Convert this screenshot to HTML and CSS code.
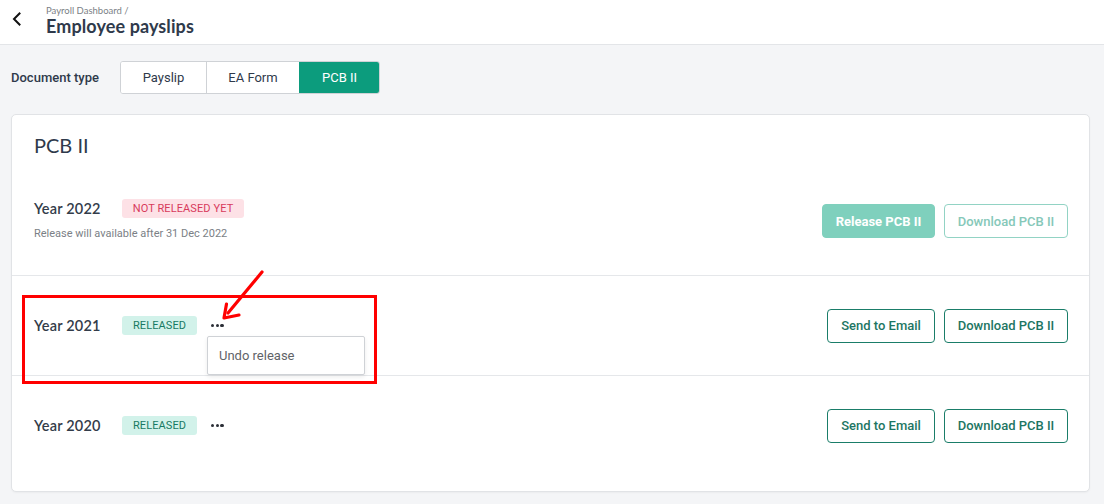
FILE: index.html
```html
<!DOCTYPE html>
<html lang="en">
<head>
<meta charset="utf-8">
<title>Employee payslips</title>
<link rel="stylesheet" href="styles.css">
</head>
<body>
<header class="topbar">
  <button class="back" aria-label="Back">
    <svg width="10" height="14" viewBox="0 0 10 14"><path d="M7.5 1.5 L2 7 L7.5 12.5" fill="none" stroke="#111" stroke-width="2" stroke-linecap="square"/></svg>
  </button>
  <div class="titles">
    <div class="crumb">Payroll Dashboard /</div>
    <h1 class="page-title">Employee payslips</h1>
  </div>
</header>

<div class="toolbar">
  <span class="toolbar-label">Document type</span>
  <div class="segmented">
    <button class="seg seg-payslip">Payslip</button>
    <button class="seg seg-ea">EA Form</button>
    <button class="seg seg-pcb active">PCB II</button>
  </div>
</div>

<section class="card">
  <h2 class="card-title">PCB II</h2>

  <div class="row row-first">
    <div class="row-left">
      <div class="row-main">
        <span class="year">Year 2022</span>
        <span class="badge badge-pending">NOT RELEASED YET</span>
      </div>
      <div class="note">Release will available after 31 Dec 2022</div>
    </div>
    <div class="actions">
      <button class="btn btn-solid-disabled btn-release">Release PCB II</button>
      <button class="btn btn-outline-disabled btn-download">Download PCB II</button>
    </div>
  </div>

  <div class="row">
    <div class="row-left">
      <div class="row-main">
        <span class="year">Year 2021</span>
        <span class="badge badge-released">RELEASED</span>
        <span class="more-wrap">
          <span class="more"><i></i><i></i><i></i></span>
          <span class="menu">Undo release</span>
        </span>
      </div>
    </div>
    <div class="actions">
      <button class="btn btn-outline btn-email">Send to Email</button>
      <button class="btn btn-outline btn-download">Download PCB II</button>
    </div>
  </div>

  <div class="row">
    <div class="row-left">
      <div class="row-main">
        <span class="year">Year 2020</span>
        <span class="badge badge-released">RELEASED</span>
        <span class="more-wrap">
          <span class="more"><i></i><i></i><i></i></span>
        </span>
      </div>
    </div>
    <div class="actions">
      <button class="btn btn-outline btn-email">Send to Email</button>
      <button class="btn btn-outline btn-download">Download PCB II</button>
    </div>
  </div>
</section>

<svg class="annotation" width="1104" height="504" viewBox="0 0 1104 504" aria-hidden="true">
  <rect x="23.5" y="296.5" width="352" height="86" fill="none" stroke="#ff0000" stroke-width="3"/>
  <path d="M262 272 L228 313" stroke="#ff0000" stroke-width="3.2" fill="none" stroke-linecap="round"/>
  <path d="M226.5 304 L224 318 L239 315" stroke="#ff0000" stroke-width="3.2" fill="none" stroke-linecap="round" stroke-linejoin="round"/>
</svg>
</body>
</html>
```

FILE: styles.css
```css
* { box-sizing: border-box; }

html, body {
  margin: 0;
  padding: 0;
}

body {
  background: #f4f5f7;
  font-family: Roboto, "Liberation Sans", sans-serif;
  color: #2d3748;
  width: 1104px;
  height: 504px;
  overflow: hidden;
  position: relative;
}

button {
  font-family: inherit;
  cursor: pointer;
}

/* Header */
.topbar {
  height: 45px;
  background: #ffffff;
  border-bottom: 1px solid #e3e5e8;
  display: flex;
  align-items: flex-start;
}

.back {
  border: 0;
  background: transparent;
  padding: 0;
  width: 46px;
  height: 38px;
  display: flex;
  align-items: center;
  padding-left: 12px;
}

.titles {
  display: flex;
  flex-direction: column;
  padding-top: 5px;
}

.crumb {
  font-family: Lato, "Liberation Sans", sans-serif;
  font-size: 9.5px;
  color: #7b7f86;
  line-height: 12px;
}

.page-title {
  margin: 0;
  font-family: Lato, "Liberation Sans", sans-serif;
  font-weight: 700;
  font-size: 18px;
  line-height: 19px;
  color: #2f3a4b;
  letter-spacing: 0.1px;
}

/* Toolbar */
.toolbar {
  display: flex;
  align-items: center;
  padding: 16px 0 0 11px;
  height: 49px;
}

.toolbar-label {
  font-size: 13px;
  font-weight: 500;
  color: #2f3a4b;
  width: 109px;
}

.segmented {
  display: flex;
  height: 33px;
  border: 1px solid #cfd2d6;
  border-radius: 3px;
  overflow: hidden;
  background: #ffffff;
}

.seg {
  border: 0;
  background: #ffffff;
  font-size: 13px;
  color: #2f3a4b;
  padding: 0;
}

.seg + .seg { border-left: 1px solid #cfd2d6; }
.seg-payslip { width: 85px; }
.seg-ea { width: 93px; }
.seg-pcb { width: 80px; }

.seg.active {
  background: #0c9c7d;
  color: #ffffff;
  border-left-color: #0c9c7d;
}

/* Card */
.card {
  margin: 20px 14px 0 11px;
  height: 378px;
  background: #ffffff;
  border: 1px solid #e1e3e6;
  border-radius: 5px;
  box-shadow: 0 1px 2px rgba(0,0,0,0.04);
  padding: 18px 0 0;
}

.card-title {
  margin: 0 0 18px 22px;
  font-family: Lato, "Liberation Sans", sans-serif;
  font-weight: 400;
  font-size: 20px;
  line-height: 24px;
  color: #2f3a4b;
}

.row {
  height: 100px;
  display: flex;
  align-items: center;
  justify-content: space-between;
  padding: 0 21px 0 22px;
  border-top: 1px solid #e5e7ea;
}

.row-first {
  border-top: 0;
  padding-bottom: 8px;
}

.row-first .row-left {
  margin-bottom: 4px;
}

.row-main {
  display: flex;
  align-items: center;
}

.year {
  width: 88px;
  font-family: Lato, "Liberation Sans", sans-serif;
  font-weight: 600;
  font-size: 14.5px;
  color: #333c4a;
  letter-spacing: 0.2px;
}

.note {
  margin-top: 9px;
  font-size: 11px;
  color: #7b7f86;
}

.badge {
  display: inline-block;
  font-size: 11px;
  line-height: 19px;
  height: 19px;
  border-radius: 3px;
  letter-spacing: 0.1px;
  text-align: center;
  padding: 0;
}

.badge-pending {
  background: #fde1e6;
  color: #d83a5c;
  width: 122px;
}

.badge-released {
  background: #d2f2ea;
  color: #177a63;
  width: 75px;
}

.more-wrap {
  position: relative;
  margin-left: 14px;
  display: inline-flex;
  align-items: center;
}

.more {
  display: inline-flex;
  gap: 1.5px;
  align-items: center;
  height: 10px;
}

.more i {
  display: block;
  width: 3.2px;
  height: 3.2px;
  border-radius: 50%;
  background: #2b2f36;
}

.menu {
  position: absolute;
  left: -4px;
  top: 15px;
  width: 158px;
  height: 39px;
  background: #ffffff;
  border: 1px solid #cfd2d6;
  border-radius: 2px;
  box-shadow: 0 2px 4px rgba(0,0,0,0.08);
  font-size: 13px;
  color: #5f6368;
  padding-left: 11px;
  display: flex;
  align-items: center;
  white-space: nowrap;
}

.actions {
  display: flex;
  gap: 9px;
}

.btn {
  height: 34px;
  border-radius: 4px;
  font-size: 13px;
  font-weight: 500;
  padding: 0;
  background: #ffffff;
}

.btn-email { width: 108px; }
.btn-download { width: 124px; }
.btn-release { width: 113px; }

.btn-outline {
  border: 1px solid #1a7d69;
  color: #1d7663;
}

.btn-outline-disabled {
  border: 1px solid #92d3c4;
  color: #86c8b9;
}

.btn-solid-disabled {
  border: 1px solid #7fd0bd;
  background: #7fd0bd;
  color: #ffffff;
  font-weight: 700;
}

/* Annotation overlay */
.annotation {
  position: absolute;
  left: 0;
  top: 0;
  pointer-events: none;
}
```
